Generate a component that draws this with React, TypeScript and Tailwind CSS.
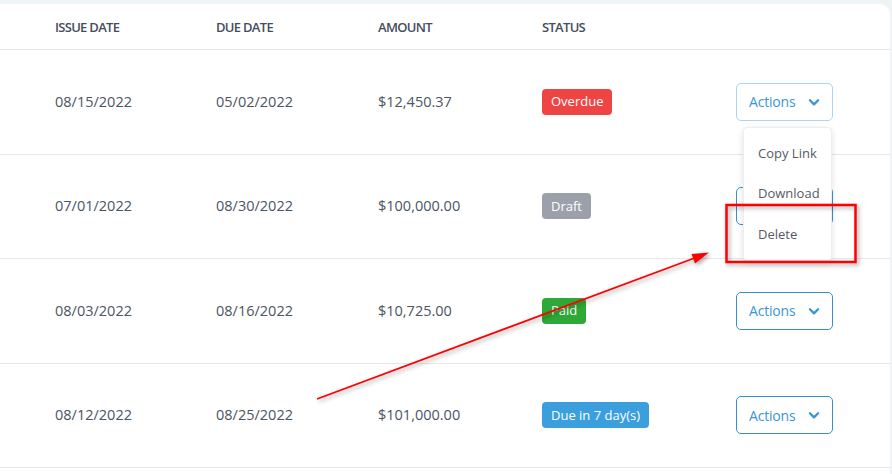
import React from 'react';

type Invoice = {
  issued: string;
  due: string;
  amount: string;
  status: string;
  badge: string;
};

const invoices: Invoice[] = [
  { issued: '08/15/2022', due: '05/02/2022', amount: '$12,450.37', status: 'Overdue', badge: 'bg-[#ef4444]' },
  { issued: '07/01/2022', due: '08/30/2022', amount: '$100,000.00', status: 'Draft', badge: 'bg-[#9ca0aa]' },
  { issued: '08/03/2022', due: '08/16/2022', amount: '$10,725.00', status: 'Paid', badge: 'bg-[#2ea836]' },
  { issued: '08/12/2022', due: '08/25/2022', amount: '$101,000.00', status: 'Due in 7 day(s)', badge: 'bg-[#3a9fdc]' },
];

function Chevron() {
  return (
    <svg width="14" height="14" viewBox="0 0 24 24" fill="none" stroke="currentColor" strokeWidth="4" strokeLinecap="round" strokeLinejoin="round">
      <path d="M5 9l7 7 7-7" />
    </svg>
  );
}

function ActionsButton({ light }: { light?: boolean }) {
  return (
    <button
      className={`flex h-[38px] w-[97px] items-center justify-between rounded-[5px] border bg-white pl-[12px] pr-[11px] text-[14px] text-[#3b96d6] ${
        light ? 'border-[#a9d5f2]' : 'border-[#3a8fcb]'
      }`}
    >
      <span className="tracking-[-0.2px]">Actions</span>
      <Chevron />
    </button>
  );
}

export default function App() {
  return (
    <div
      className="relative h-[474px] w-[892px] overflow-hidden bg-[#eef3f5] pt-[4px]"
      style={{ fontFamily: '"Open Sans", "Noto Sans", sans-serif' }}
    >
      <div className="h-full w-[890px] rounded-tr-[10px] bg-white">
        {/* header */}
        <div className="flex h-[46px] items-center border-b border-[#e5e7eb] pt-[3px] text-[13px] font-semibold uppercase tracking-[-0.7px] text-[#454d5c]">
          <div className="w-[216px] pl-[55px]">Issue Date</div>
          <div className="w-[162px]">Due Date</div>
          <div className="w-[164px]">Amount</div>
          <div className="w-[194px]">Status</div>
        </div>

        {invoices.map((inv, i) => (
          <div key={inv.issued} className="flex h-[104.5px] items-center border-b border-[#e5e7eb] text-[14.5px] text-[#4b5563]">
            <div className="w-[216px] pl-[55px]">{inv.issued}</div>
            <div className="w-[162px]">{inv.due}</div>
            <div className="w-[164px]">{inv.amount}</div>
            <div className="w-[194px]">
              <span className={`inline-flex h-[26px] items-center rounded-[4px] px-[9px] text-[13px] text-white ${inv.badge}`}>
                {inv.status}
              </span>
            </div>
            <div className="relative">
              <ActionsButton light={i === 0} />
              {i === 0 && (
                <div className="absolute left-[7px] top-[44px] z-10 flex w-[89px] flex-col rounded-[4px] border border-[#eceef1] bg-white pt-[6px] pb-[6px] text-[13px] text-[#555b66] shadow-[0_2px_6px_rgba(0,0,0,0.12)]">
                  <div className="flex h-[40px] items-center pl-[14px]">Copy Link</div>
                  <div className="flex h-[40.5px] items-center pl-[14px]">Download</div>
                  <div className="flex h-[40px] items-center pl-[14px]">Delete</div>
                </div>
              )}
            </div>
          </div>
        ))}
      </div>

      {/* annotation overlay */}
      <svg
        className="pointer-events-none absolute left-0 top-0 z-20"
        width="892"
        height="474"
        style={{ filter: 'drop-shadow(2px 2px 2px rgba(0,0,0,0.35))' }}
      >
        <rect x="726.5" y="205" width="129" height="57" fill="none" stroke="#ff0000" strokeWidth="2.5" />
        <line x1="317" y1="399" x2="696" y2="257.5" stroke="#ff0000" strokeWidth="1.8" />
        <polygon points="709,252.5 695,263.5 691.5,254" fill="#ff0000" />
      </svg>
    </div>
  );
}
